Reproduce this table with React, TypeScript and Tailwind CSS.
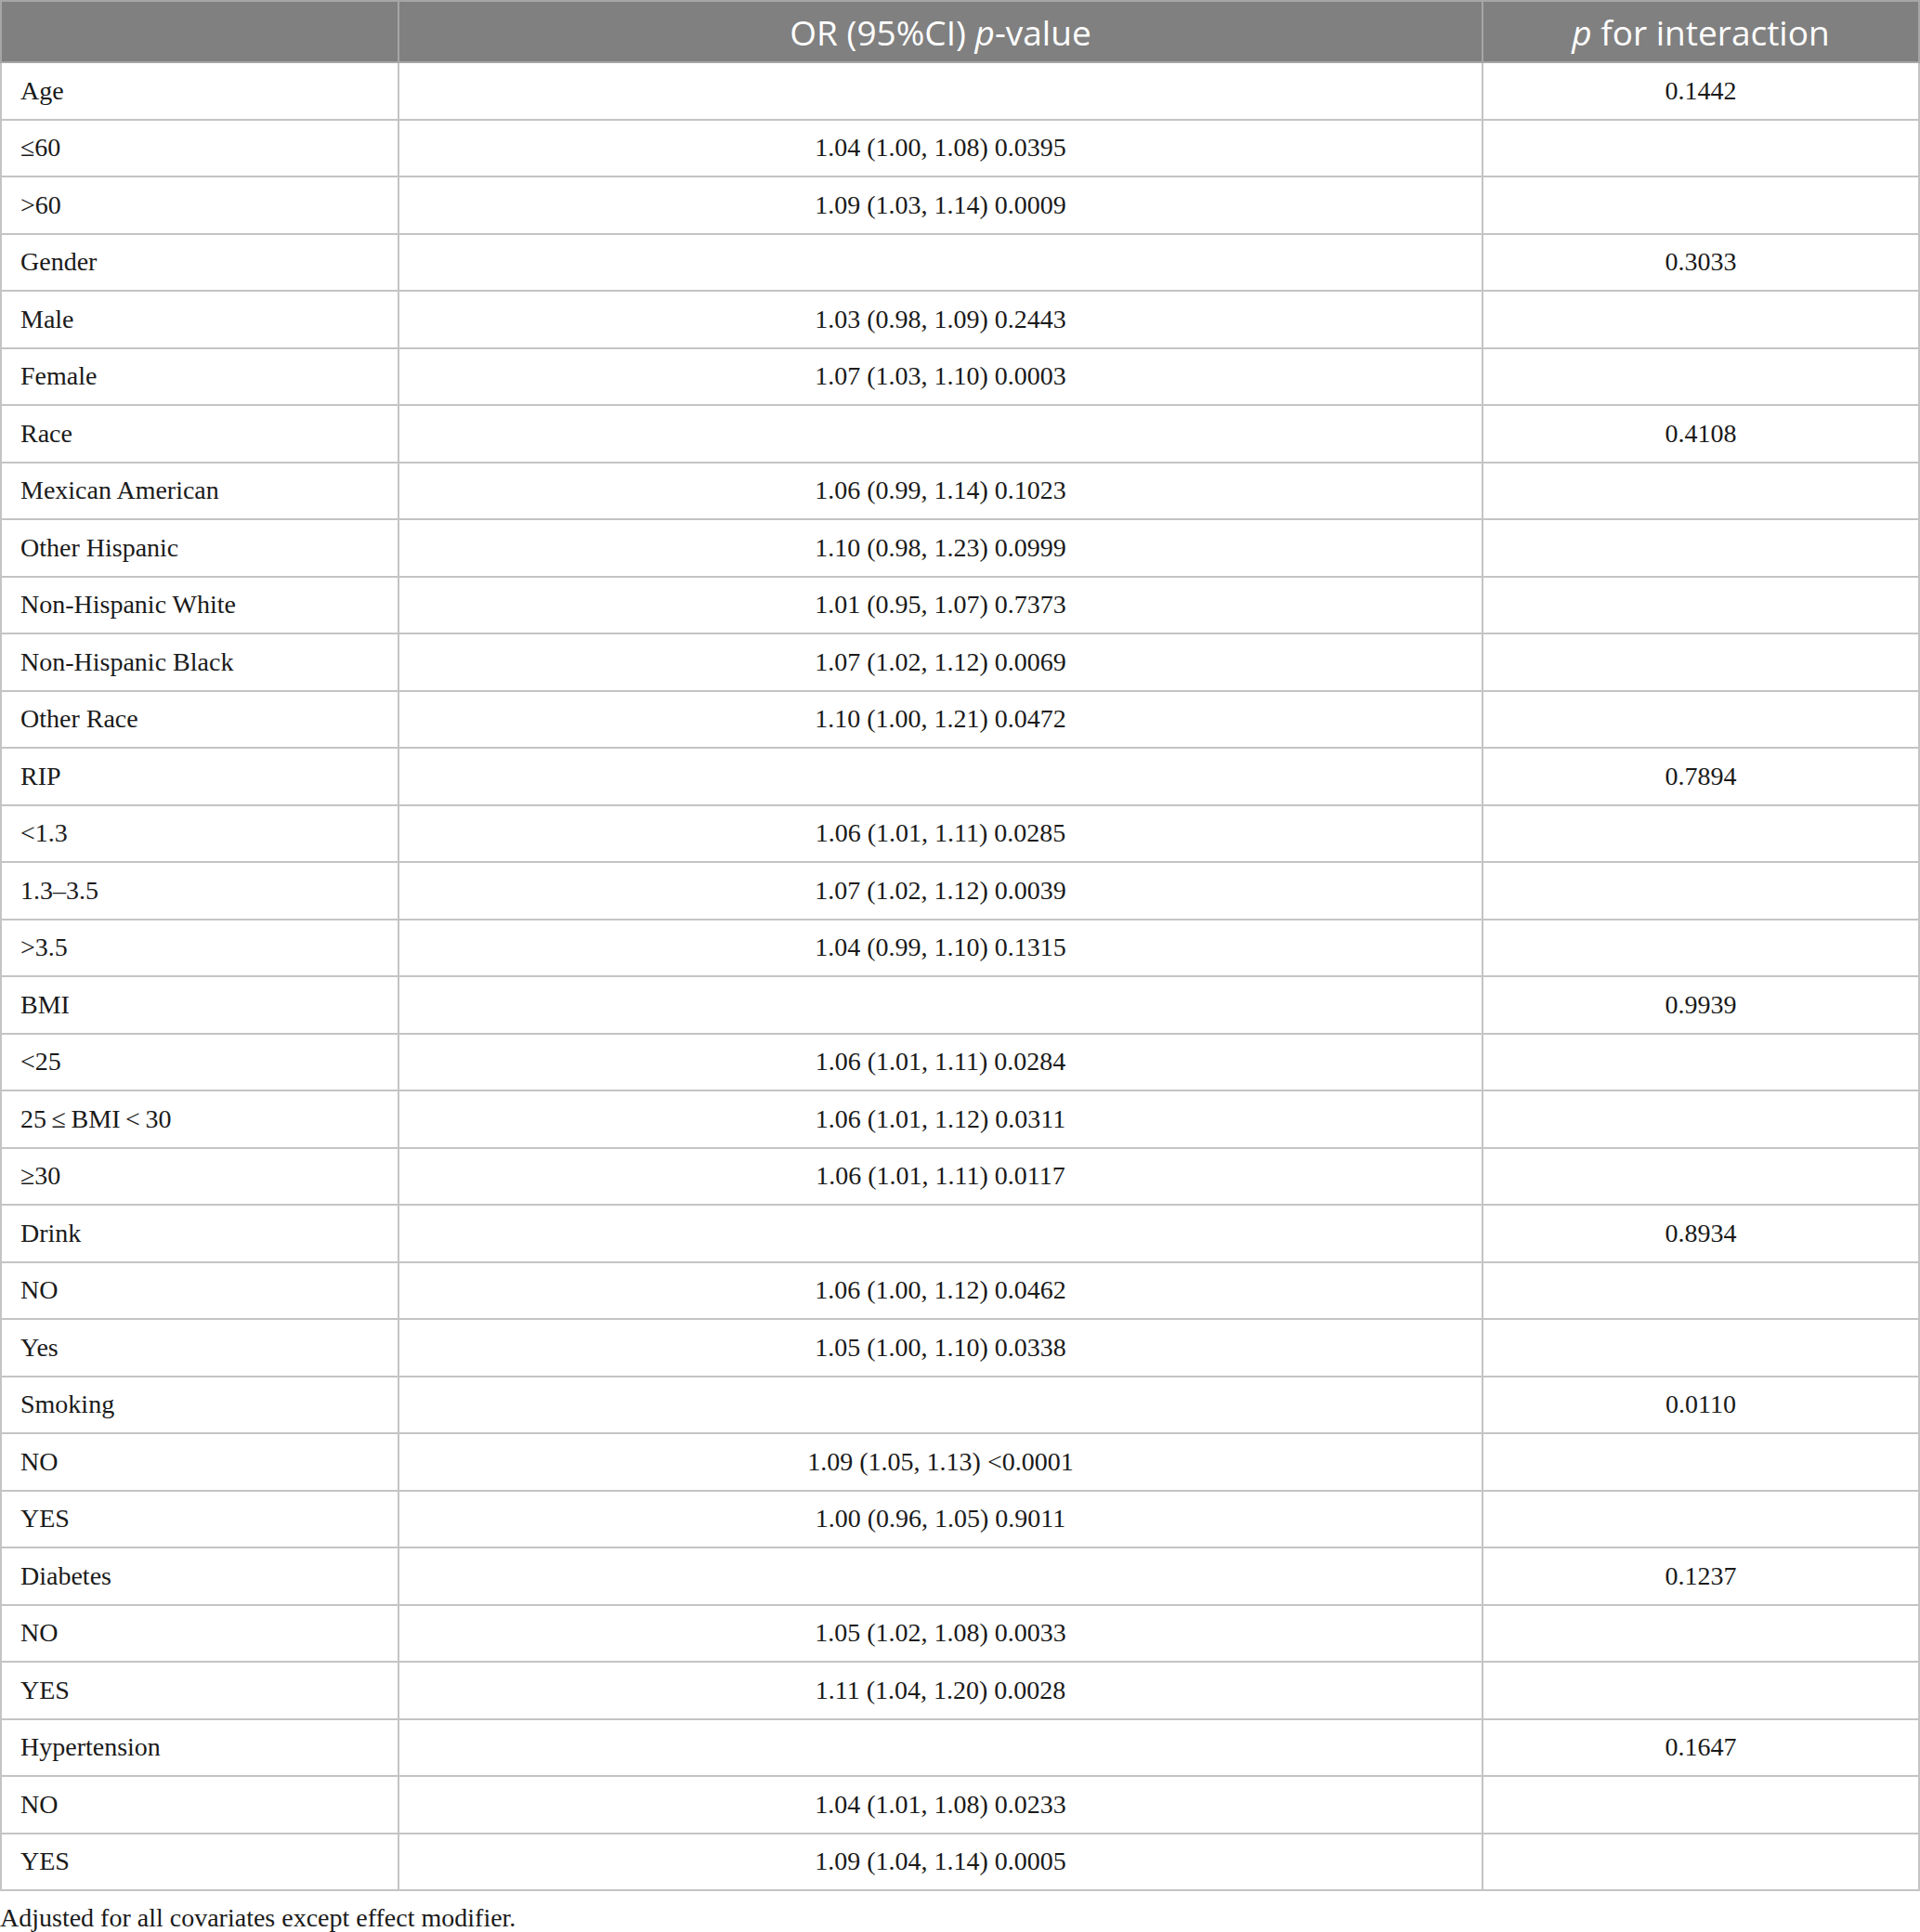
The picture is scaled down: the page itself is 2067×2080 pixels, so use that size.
const rows: [string, string, string][] = [
  ["Age", "", "0.1442"],
  ["≤60", "1.04 (1.00, 1.08) 0.0395", ""],
  [">60", "1.09 (1.03, 1.14) 0.0009", ""],
  ["Gender", "", "0.3033"],
  ["Male", "1.03 (0.98, 1.09) 0.2443", ""],
  ["Female", "1.07 (1.03, 1.10) 0.0003", ""],
  ["Race", "", "0.4108"],
  ["Mexican American", "1.06 (0.99, 1.14) 0.1023", ""],
  ["Other Hispanic", "1.10 (0.98, 1.23) 0.0999", ""],
  ["Non-Hispanic White", "1.01 (0.95, 1.07) 0.7373", ""],
  ["Non-Hispanic Black", "1.07 (1.02, 1.12) 0.0069", ""],
  ["Other Race", "1.10 (1.00, 1.21) 0.0472", ""],
  ["RIP", "", "0.7894"],
  ["<1.3", "1.06 (1.01, 1.11) 0.0285", ""],
  ["1.3–3.5", "1.07 (1.02, 1.12) 0.0039", ""],
  [">3.5", "1.04 (0.99, 1.10) 0.1315", ""],
  ["BMI", "", "0.9939"],
  ["<25", "1.06 (1.01, 1.11) 0.0284", ""],
  ["25\u2009≤\u2009BMI\u2009<\u200930", "1.06 (1.01, 1.12) 0.0311", ""],
  ["≥30", "1.06 (1.01, 1.11) 0.0117", ""],
  ["Drink", "", "0.8934"],
  ["NO", "1.06 (1.00, 1.12) 0.0462", ""],
  ["Yes", "1.05 (1.00, 1.10) 0.0338", ""],
  ["Smoking", "", "0.0110"],
  ["NO", "1.09 (1.05, 1.13) <0.0001", ""],
  ["YES", "1.00 (0.96, 1.05) 0.9011", ""],
  ["Diabetes", "", "0.1237"],
  ["NO", "1.05 (1.02, 1.08) 0.0033", ""],
  ["YES", "1.11 (1.04, 1.20) 0.0028", ""],
  ["Hypertension", "", "0.1647"],
  ["NO", "1.04 (1.01, 1.08) 0.0233", ""],
  ["YES", "1.09 (1.04, 1.14) 0.0005", ""],
];

export default function App() {
  return (
    <div className="w-[2067px] bg-white font-['Liberation_Serif',serif] text-[#1a1a1a]">
      <table className="w-full table-fixed border-collapse">
        <colgroup>
          <col className="w-[428px]" />
          <col className="w-[1167px]" />
          <col />
        </colgroup>
        <thead>
          <tr className="h-[66px] bg-[#808080] text-white font-['Open_Sans',sans-serif] text-[37px] leading-none">
            <th className="border-2 border-[#a6a6a6] font-normal"></th>
            <th className="border-2 border-[#a6a6a6] font-normal">
              OR (95%CI) <i>p</i>-value
            </th>
            <th className="border-2 border-[#a6a6a6] font-normal">
              <i>p</i> for interaction
            </th>
          </tr>
        </thead>
        <tbody className="text-[28px]">
          {rows.map(([label, or, p], i) => (
            <tr key={i} className="h-[61.5px]">
              <td className="border-2 border-[#c4c4c4] pl-[20px] text-left">{label}</td>
              <td className="border-2 border-[#c4c4c4] text-center">{or}</td>
              <td className="border-2 border-[#c4c4c4] text-center">{p}</td>
            </tr>
          ))}
        </tbody>
      </table>
      <p className="mt-[12px] text-[28px] leading-[34px]">
        Adjusted for all covariates except effect modifier.
      </p>
    </div>
  );
}
